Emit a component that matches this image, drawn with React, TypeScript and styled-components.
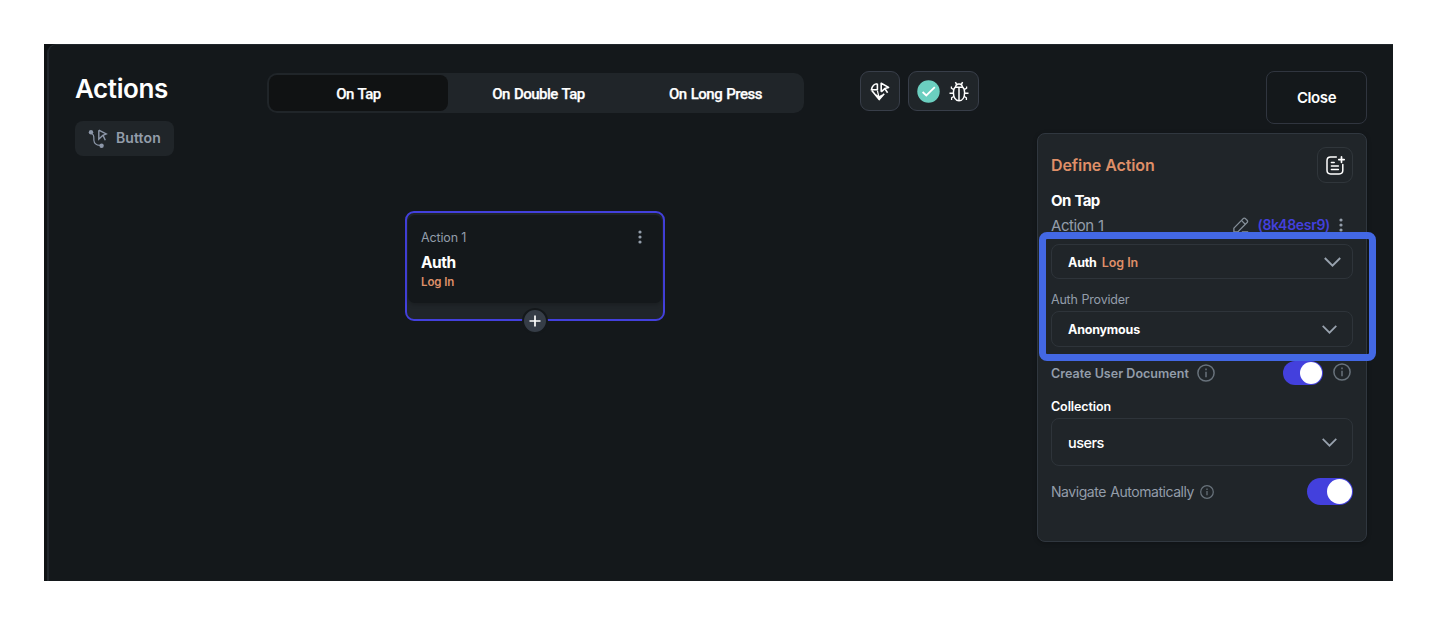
import React from "react";
import styled, { createGlobalStyle, ThemeProvider } from "styled-components";

const theme = {
  bg: "#14181b",
  surface: "#202529",
  ink: "#101213",
  line: "#30373f",
  lineSoft: "#2e343a",
  primary: "#4340dd",
  accent: "#df8f68",
  muted: "#939daa",
  text: "#ffffff",
  callout: "#4368e4",
};

type Tone = "text" | "muted" | "accent" | "primary";

const GlobalStyle = createGlobalStyle`
  *, *::before, *::after { box-sizing: border-box; }
  body { margin: 0; background: #fff; }
  button { font: inherit; color: inherit; background: none; border: 0; padding: 0; margin: 0; }
  svg { display: block; flex: none; }
`;

const Page = styled.div`
  height: 626px;
  padding: 44px 55px 45px 44px;
  background: #fff;
  font-family: Inter, "Liberation Sans", sans-serif;
  color: ${(p) => p.theme.text};
  overflow: hidden;
`;

const Frame = styled.div`
  height: 537px;
  padding-left: 3px;
  background: #0f1214;
`;

const Workspace = styled.main`
  position: relative;
  display: flex;
  align-items: flex-start;
  height: 537px;
  padding: 26px 26px 0 26px;
  background: ${(p) => p.theme.bg};
  border: 1px solid #20262b;
  border-left-width: 2px;
  border-right: 0;
  border-bottom: 0;
  border-top-left-radius: 9px;
`;

const Label = styled.span<{ $size: number; $weight?: number; $tone?: Tone; $track?: number; $word?: number }>`
  font-size: ${(p) => p.$size}px;
  font-weight: ${(p) => p.$weight ?? 400};
  letter-spacing: ${(p) => p.$track ?? 0}px;
  word-spacing: ${(p) => p.$word ?? 0}px;
  color: ${(p) => p.theme[p.$tone ?? "text"]};
  white-space: nowrap;
`;

/* Heading column */

const Heading = styled.div`
  display: flex;
  flex-direction: column;
  align-items: flex-start;
  gap: 15px;
  width: 192px;
`;

const Title = styled.h1`
  margin: 0;
  font-size: 26px;
  line-height: 35px;
  font-weight: 600;
  letter-spacing: -0.4px;
`;

const WidgetChip = styled.div`
  display: flex;
  align-items: center;
  gap: 8px;
  height: 35px;
  width: 99px;
  padding: 0 0 0 13px;
  border-radius: 8px;
  background: ${(p) => p.theme.surface};
`;

const ChipLabel = styled(Label)`
  padding-bottom: 2px;
`;

/* Trigger tabs */

const Tabs = styled.div`
  display: grid;
  grid-template-columns: 179px 181px 1fr;
  width: 537px;
  height: 40px;
  margin-top: 2px;
  padding: 2px;
  border-radius: 10px;
  background: ${(p) => p.theme.surface};
`;

const Tab = styled.button<{ $active?: boolean }>`
  display: flex;
  align-items: center;
  justify-content: center;
  padding-top: 1px;
  border-radius: 8px;
  background: ${(p) => (p.$active ? p.theme.ink : "transparent")};
  font: 500 15px Roboto, sans-serif;
  letter-spacing: -0.5px;
  word-spacing: 0.8px;
  -webkit-text-stroke: 0.25px currentColor;
`;

/* Toolbar */

const Tools = styled.div`
  display: flex;
  gap: 8px;
  margin-left: 56px;
`;

const ToolBox = styled.div<{ $width: number }>`
  display: flex;
  align-items: center;
  justify-content: center;
  gap: 9px;
  width: ${(p) => p.$width}px;
  height: 40px;
  padding-right: 1px;
  border: 1px solid #383e49;
  border-radius: 9px;
  background: ${(p) => p.theme.surface};
`;

/* Action node on the canvas */

const ActionNode = styled.article`
  position: absolute;
  left: 356px;
  top: 166px;
  width: 260px;
  height: 110px;
  padding: 2px 1px;
  border: 2px solid ${(p) => p.theme.primary};
  border-radius: 9px;
  background: ${(p) => p.theme.surface};
`;

const NodeBody = styled.div`
  display: flex;
  flex-direction: column;
  align-items: flex-start;
  height: 88px;
  padding: 13px 13px 0;
  border-radius: 7px;
  background: ${(p) => p.theme.bg};
  box-shadow: 0 2px 4px rgba(0, 0, 0, 0.2);
`;

const NodeTop = styled.div`
  display: flex;
  align-items: center;
  justify-content: space-between;
  align-self: stretch;
  height: 18px;
  padding-right: 7px;
`;

const NodeTitle = styled(Label)`
  margin-top: 6px;
  line-height: 22px;
`;

const NodeSubtitle = styled(Label)`
  line-height: 17px;
`;

const AddButton = styled.button`
  position: absolute;
  left: 115px;
  top: 95px;
  display: grid;
  place-items: center;
  width: 26px;
  height: 26px;
  border: 2px solid ${(p) => p.theme.bg};
  border-radius: 50%;
  background: #363d47;
`;

/* Side column */

const Side = styled.aside`
  display: flex;
  flex-direction: column;
  width: 330px;
  margin-left: auto;
`;

const CloseButton = styled.button`
  align-self: flex-end;
  width: 101px;
  height: 53px;
  border: 1px solid #30353f;
  border-radius: 8px;
  font-size: 15px;
  font-weight: 600;
  letter-spacing: -0.4px;
`;

const Panel = styled.section`
  position: relative;
  display: flex;
  flex-direction: column;
  height: 409px;
  margin-top: 9px;
  padding: 13px;
  border: 1px solid ${(p) => p.theme.line};
  border-radius: 8px;
  background: ${(p) => p.theme.surface};
  box-shadow: 0 1px 4px rgba(0, 0, 0, 0.25);
`;

const Row = styled.div<{ $height: number; $top?: number }>`
  display: flex;
  align-items: center;
  height: ${(p) => p.$height}px;
  margin-top: ${(p) => p.$top ?? 0}px;
`;

const Push = styled.div<{ $end?: number }>`
  display: flex;
  align-items: center;
  margin-left: auto;
  padding-right: ${(p) => p.$end ?? 0}px;
`;

const IdLabel = styled(Label)`
  margin: 0 9px 0 8px;
  padding-bottom: 1px;
`;

const IconButton = styled.button`
  display: grid;
  place-items: center;
  width: 36px;
  height: 36px;
  margin-left: auto;
  border: 1px solid #30363b;
  border-radius: 9px;
`;

const Select = styled.div<{ $height: number; $top: number; $end?: number; $drop?: number }>`
  display: flex;
  flex: none;
  align-items: center;
  gap: 5px;
  height: ${(p) => p.$height}px;
  margin-top: ${(p) => p.$top}px;
  padding: ${(p) => p.$drop ?? 0}px ${(p) => p.$end ?? 15}px 0 16px;
  border: 1px solid ${(p) => p.theme.lineSoft};
  border-radius: 8px;
  & > svg { margin-left: auto; }
`;

const Switch = styled.div<{ $width: number; $height: number }>`
  display: flex;
  justify-content: flex-end;
  width: ${(p) => p.$width}px;
  height: ${(p) => p.$height}px;
  padding: 1px;
  border-radius: 14px;
  background: ${(p) => p.theme.primary};
  &::after {
    content: "";
    width: ${(p) => p.$height - 2}px;
    border-radius: 50%;
    background: #fff;
  }
`;

const InfoAfterSwitch = styled.span`
  margin: -2px 2px 0 10px;
`;

const InfoInline = styled.span<{ $gap: number }>`
  margin-left: ${(p) => p.$gap}px;
`;

const Callout = styled.div`
  position: absolute;
  left: 1px;
  top: 98px;
  width: 337px;
  height: 129px;
  border: 7px solid ${(p) => p.theme.callout};
  border-radius: 8px;
  pointer-events: none;
`;

/* Icons */

const Dots = () => (
  <svg width="4" height="14" viewBox="0 0 4 14" fill="#939daa">
    <circle cx="2" cy="2" r="1.6" />
    <circle cx="2" cy="7" r="1.6" />
    <circle cx="2" cy="12" r="1.6" />
  </svg>
);

const Chevron = ({ w = 15 }: { w?: number }) => (
  <svg width={w} height={w * 0.6} viewBox="0 0 15 9" fill="none" stroke="#98a2ae" strokeWidth="1.7">
    <path d="M0.7 0.9 L7.5 7.7 L14.3 0.9" />
  </svg>
);

const Info = ({ size }: { size: number }) => (
  <svg width={size} height={size} viewBox="0 0 18 18" fill="none" stroke="#68727b" strokeWidth={size > 15 ? 1.5 : 1.6}>
    <circle cx="9" cy="9" r="8.1" />
    <path d="M9 7.8 V13.2" />
    <path d="M9 4.6 V6.3" />
  </svg>
);

const FlowIcon = () => (
  <svg width="20" height="20" viewBox="0 0 20 20" fill="none" stroke="#8d97a9" strokeWidth="1.2">
    <circle cx="3" cy="3.3" r="2.2" fill="#8d97a9" stroke="none" />
    <circle cx="13.6" cy="16.7" r="2.2" fill="#8d97a9" stroke="none" />
    <path d="M3.3 4.5 C6.8 5.5 5.6 8.5 5.9 11.3 C6.1 14.6 8.3 16.2 12 16.4" />
    <path d="M10.8 1.2 L18.2 5 L15 6.3 L17.3 11.3 M10.8 1.2 V10.2 L14.9 6.3" strokeWidth="1.4" />
  </svg>
);

const BranchIcon = () => (
  <svg width="20" height="19" viewBox="0 0 20 19" fill="none" stroke="#fff" strokeWidth="1.6" strokeLinejoin="round">
    <path d="M7.4 1.8 C4 1.8 2.2 4 1.4 7.8 H7.4 V1.8" />
    <path d="M1.8 8.4 L9.2 17.6 L14.2 11.8" />
    <path d="M7.4 8.6 L9 15.4" strokeWidth="1.2" />
    <path d="M6.2 12.8 L9 14.6 L12.4 12.8 L9.2 17.2 Z" fill="#fff" strokeWidth="0.8" />
    <path d="M11.2 9.8 V1.2 L18.6 5.4 L14.8 6.6 L17.6 10.8 M14.8 6.6 L11.2 9.8" />
  </svg>
);

const CheckIcon = () => (
  <svg width="23" height="23" viewBox="0 0 23 23">
    <circle cx="11.5" cy="11.5" r="11.2" fill="#6bcfc0" />
    <path d="M5.6 12 L9.3 15.5 L17.8 7.2" fill="none" stroke="#fff" strokeWidth="1.8" />
  </svg>
);

const BugIcon = () => (
  <svg width="20" height="21" viewBox="0 0 20 21" fill="none" stroke="#fff" strokeWidth="1.5">
    <path d="M6.6 6.4 C6.6 3.8 8 2.9 10 2.9 C12 2.9 13.4 3.8 13.4 6.4" />
    <path d="M6.3 6.2 H13.7 C15.2 7.4 15.6 9 15.6 11.4 C15.6 16.2 13.6 19.8 10 19.8 C6.4 19.8 4.4 16.2 4.4 11.4 C4.4 9 4.8 7.4 6.3 6.2 Z" />
    <path d="M10 6.4 V19.6" />
    <path d="M6.4 1.2 L7.6 3.3 M13.6 1.2 L12.4 3.3" />
    <path d="M4.8 8.6 L2.4 7.2 V5.4 M15.2 8.6 L17.6 7.2 V5.4" strokeWidth="1.3" />
    <path d="M4.4 12.2 H0.5 M15.6 12.2 H19.5" />
    <path d="M5 15.4 L2.6 16.8 V19 M15 15.4 L17.4 16.8 V19" strokeWidth="1.3" />
  </svg>
);

const PlusIcon = () => (
  <svg width="12" height="12" viewBox="0 0 12 12" stroke="#fff" strokeWidth="1.7">
    <path d="M6 0.5 V11.5 M0.5 6 H11.5" />
  </svg>
);

const AddNoteIcon = () => (
  <svg width="19" height="19" viewBox="0 0 19 19" fill="none" stroke="#fff" strokeWidth="1.5" strokeLinecap="round">
    <path d="M10.3 1.1 H4.6 Q1 1.1 1 4.7 V14.3 Q1 17.9 4.6 17.9 H13.2 Q16.8 17.9 16.8 14.3 V8.6" />
    <path d="M15.5 0.9 V6.3 M12.8 3.6 H18.2" strokeWidth="1.7" />
    <path d="M5.4 6.4 H8.2 M5.4 10 H12.4 M5.4 13.5 H12.4" />
  </svg>
);

const PencilIcon = () => (
  <svg width="16" height="16" viewBox="0 0 16 16" fill="none" stroke="#858f99" strokeWidth="1.3" strokeLinejoin="round">
    <path d="M0.9 14.9 V11.1 L10.2 1.6 Q11.3 0.6 12.4 1.6 L14.1 3.3 Q15.1 4.4 14.1 5.5 L4.8 14.9 Z" />
    <path d="M8.4 3.4 L12.2 7.3" />
    <path d="M8.8 14.9 H15.2" />
  </svg>
);

export default function App() {
  return (
    <ThemeProvider theme={theme}>
      <GlobalStyle />
      <Page>
        <Frame>
          <Workspace>
            <Heading>
              <Title>Actions</Title>
              <WidgetChip>
                <FlowIcon />
                <ChipLabel $size={14} $weight={600} $tone="muted" $track={0.1}>Button</ChipLabel>
              </WidgetChip>
            </Heading>

            <Tabs>
              <Tab $active>On Tap</Tab>
              <Tab>On Double Tap</Tab>
              <Tab>On Long Press</Tab>
            </Tabs>

            <Tools>
              <ToolBox $width={40}><BranchIcon /></ToolBox>
              <ToolBox $width={71}><CheckIcon /><BugIcon /></ToolBox>
            </Tools>

            <ActionNode>
              <NodeBody>
                <NodeTop>
                  <Label $size={12.5} $tone="muted" $track={-0.15}>Action 1</Label>
                  <Dots />
                </NodeTop>
                <NodeTitle $size={15.5} $weight={700} $track={-0.5}>Auth</NodeTitle>
                <NodeSubtitle $size={11.5} $weight={600} $tone="accent" $track={-0.1}>Log In</NodeSubtitle>
              </NodeBody>
              <AddButton aria-label="Add action"><PlusIcon /></AddButton>
            </ActionNode>

            <Side>
              <CloseButton>Close</CloseButton>
              <Panel>
                <Row $height={36}>
                  <Label $size={16} $weight={600} $tone="accent" $track={-0.09}>Define Action</Label>
                  <IconButton aria-label="Add note"><AddNoteIcon /></IconButton>
                </Row>
                <Row $height={22} $top={6}>
                  <Label $size={15} $weight={700} $track={-0.65} $word={1}>On Tap</Label>
                </Row>
                <Row $height={24} $top={2}>
                  <Label $size={15} $tone="muted" $track={-0.42} $word={0.5}>Action 1</Label>
                  <Push $end={10}>
                    <PencilIcon />
                    <IdLabel $size={14} $weight={600} $tone="primary" $track={-0.3}>(8k48esr9)</IdLabel>
                    <Dots />
                  </Push>
                </Row>
                <Select $height={35} $top={7} $end={11} $drop={2}>
                  <Label $size={12.5} $weight={700} $track={-0.2}>Auth</Label>
                  <Label $size={12.5} $weight={600} $tone="accent" $track={-0.05}>Log In</Label>
                  <Chevron w={17} />
                </Select>
                <Row $height={16} $top={12}>
                  <Label $size={12.5} $tone="muted" $track={-0.2} $word={0.5}>Auth Provider</Label>
                </Row>
                <Select $height={36} $top={4}>
                  <Label $size={12.5} $weight={700} $track={-0.2}>Anonymous</Label>
                  <Chevron />
                </Select>
                <Row $height={24} $top={14}>
                  <Label $size={12.5} $weight={600} $tone="muted" $track={0.03}>Create User Document</Label>
                  <InfoInline $gap={8}><Info size={18} /></InfoInline>
                  <Push>
                    <Switch $width={40} $height={24} />
                    <InfoAfterSwitch><Info size={18} /></InfoAfterSwitch>
                  </Push>
                </Row>
                <Row $height={16} $top={13}>
                  <Label $size={12.5} $weight={600} $track={-0.09}>Collection</Label>
                </Row>
                <Select $height={48} $top={4}>
                  <Label $size={14.5} $weight={500} $track={-0.55}>users</Label>
                  <Chevron />
                </Select>
                <Row $height={27} $top={12}>
                  <Label $size={14} $tone="muted" $track={-0.45} $word={0.8}>Navigate Automatically</Label>
                  <InfoInline $gap={6}><Info size={14} /></InfoInline>
                  <Push><Switch $width={46} $height={27} /></Push>
                </Row>
                <Callout />
              </Panel>
            </Side>
          </Workspace>
        </Frame>
      </Page>
    </ThemeProvider>
  );
}
